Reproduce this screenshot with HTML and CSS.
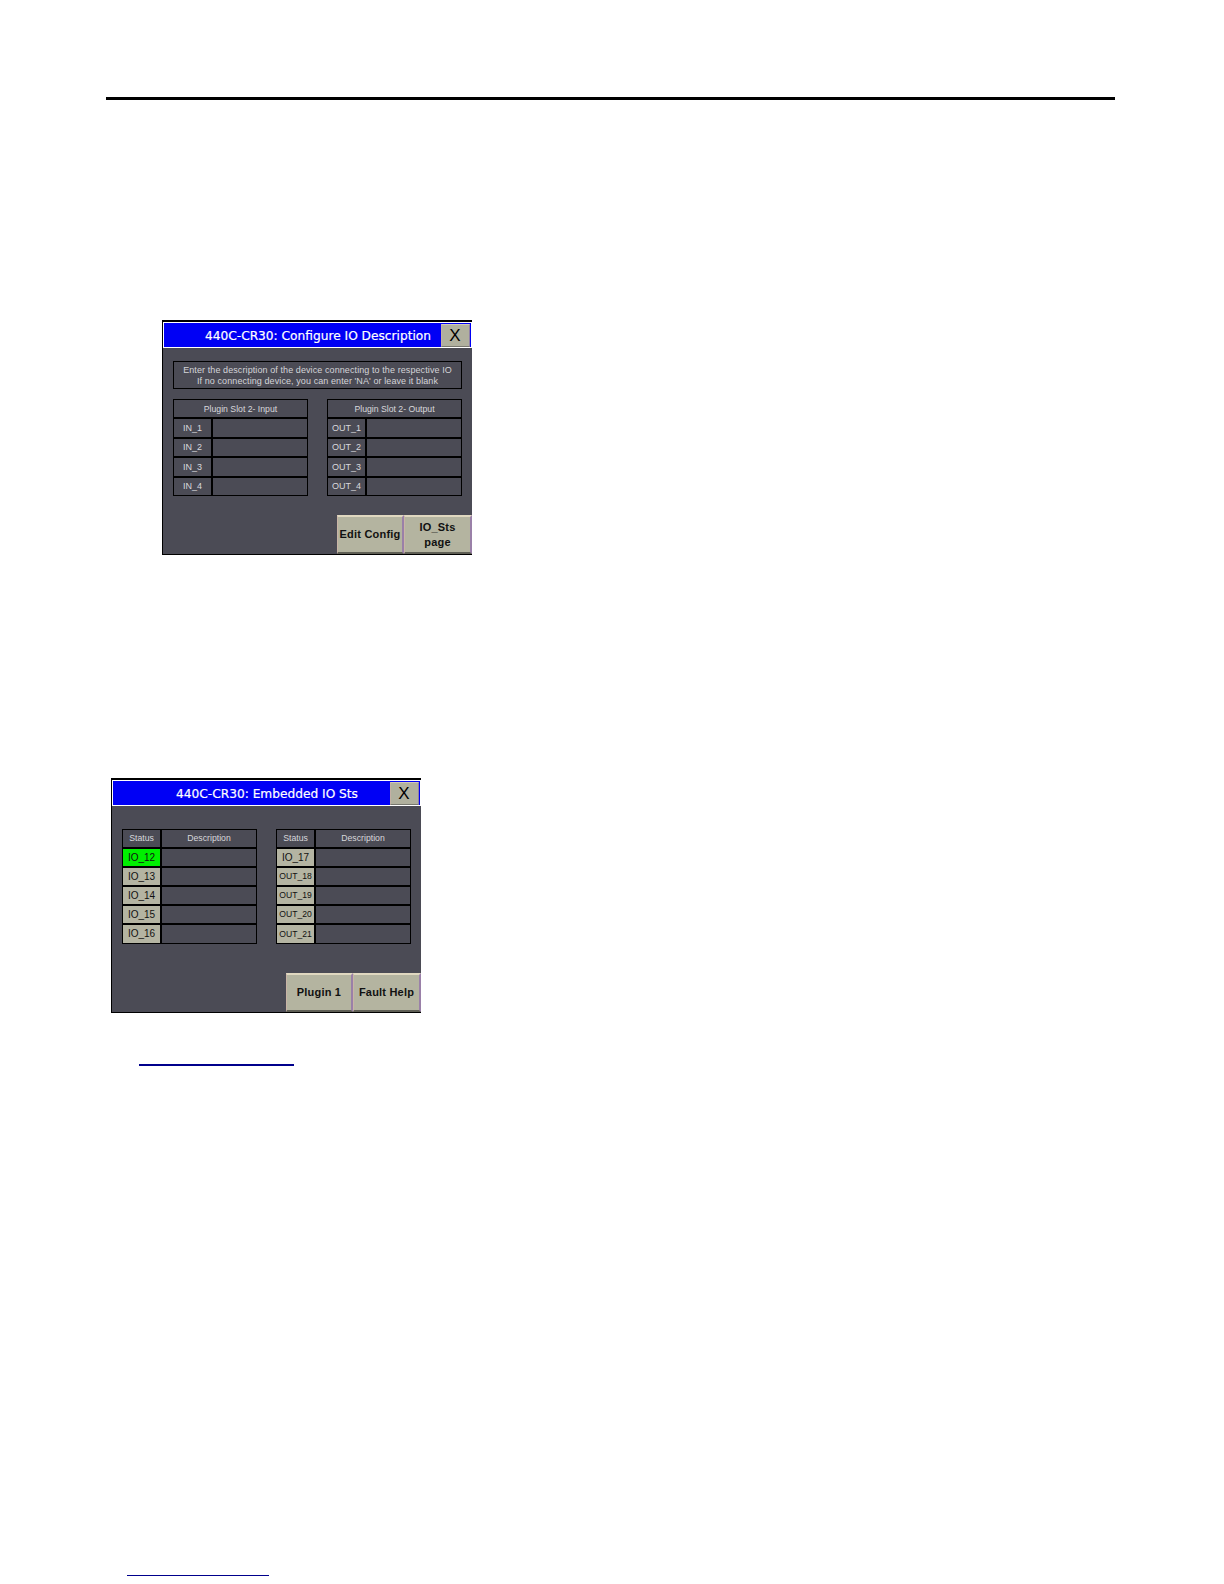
FILE: index.html
```html
<!DOCTYPE html>
<html lang="en">
<head>
<meta charset="utf-8">
<title>440C-CR30 IO screens</title>
<link rel="stylesheet" href="styles.css">
</head>
<body>
<div class="rule"></div>

<section class="window window-config">
  <header class="titlebar">
    <h2 class="title">440C-CR30: Configure IO Description</h2>
    <button class="close">X</button>
  </header>
  <div class="notice">
    <p>Enter the description of the device connecting to the respective IO</p>
    <p>If no connecting device, you can enter 'NA' or leave it blank</p>
  </div>
  <div class="tables">
    <div class="iotable">
      <div class="cell head span">Plugin Slot 2- Input</div>
      <div class="cell label">IN_1</div><div class="cell"></div>
      <div class="cell label">IN_2</div><div class="cell"></div>
      <div class="cell label">IN_3</div><div class="cell"></div>
      <div class="cell label">IN_4</div><div class="cell"></div>
    </div>
    <div class="iotable">
      <div class="cell head span">Plugin Slot 2- Output</div>
      <div class="cell label">OUT_1</div><div class="cell"></div>
      <div class="cell label">OUT_2</div><div class="cell"></div>
      <div class="cell label">OUT_3</div><div class="cell"></div>
      <div class="cell label">OUT_4</div><div class="cell"></div>
    </div>
  </div>
  <div class="actions">
    <button class="action">Edit Config</button>
    <button class="action">IO_Sts<br>page</button>
  </div>
</section>

<section class="window window-status">
  <header class="titlebar">
    <h2 class="title">440C-CR30: Embedded IO Sts</h2>
    <button class="close">X</button>
  </header>
  <div class="tables tables-status">
    <div class="iotable">
      <div class="cell head">Status</div><div class="cell head">Description</div>
      <div class="cell status on">IO_12</div><div class="cell"></div>
      <div class="cell status">IO_13</div><div class="cell"></div>
      <div class="cell status">IO_14</div><div class="cell"></div>
      <div class="cell status">IO_15</div><div class="cell"></div>
      <div class="cell status">IO_16</div><div class="cell"></div>
    </div>
    <div class="iotable">
      <div class="cell head">Status</div><div class="cell head">Description</div>
      <div class="cell status">IO_17</div><div class="cell"></div>
      <div class="cell status narrow">OUT_18</div><div class="cell"></div>
      <div class="cell status narrow">OUT_19</div><div class="cell"></div>
      <div class="cell status narrow">OUT_20</div><div class="cell"></div>
      <div class="cell status narrow">OUT_21</div><div class="cell"></div>
    </div>
  </div>
  <div class="actions">
    <button class="action">Plugin 1</button>
    <button class="action">Fault Help</button>
  </div>
</section>

<div class="linkline linkline-body"></div>
<div class="linkline linkline-foot"></div>
</body>
</html>
```

FILE: styles.css
```css
* { box-sizing: border-box; }

html, body { margin: 0; padding: 0; background: #fff; }

body {
  height: 1584px;
  overflow: hidden;
  font-family: "Liberation Sans", Arial, sans-serif;
}

.rule {
  height: 3px;
  margin: 97px 109px 0 106px;
  background: #000;
}

.window {
  display: flex;
  flex-direction: column;
  width: 310px;
  height: 235px;
  background: #4b4b55;
  border: solid #000;
  border-width: 2px 0 1px 1px;
}

.window-config { margin: 220px 0 0 162px; }
.window-status { margin: 223px 0 0 111px; }

.titlebar {
  display: grid;
  grid-template-columns: 1fr auto 1fr;
  align-items: center;
  height: 26px;
  padding: 0 1px 0 2px;
  background: #0000f5;
  border: 1px solid #fff;
}

.title {
  grid-column: 2;
  margin: 2px 0 0;
  font: 400 12.2px "DejaVu Sans", sans-serif;
  color: #fff;
  white-space: nowrap;
  -webkit-text-stroke: 0.2px #fff;
}

.close {
  grid-column: 3;
  justify-self: end;
  width: 29px;
  height: 23px;
  margin-top: 1px;
  padding: 0 1px 0 0;
  background: #b0b09e;
  border: 1px solid;
  border-color: #cfc8b8 #8f80a8 #77776f #c4b0a4;
  font: 400 17px "Liberation Sans", sans-serif;
  color: #000;
}

.notice {
  margin: 13px 10px 0 10px;
  height: 28px;
  border: 1px solid #000;
  color: #d4d4d8;
  font-size: 9px;
  letter-spacing: 0.09px;
  line-height: 11px;
  text-align: center;
  padding-top: 3px;
}

.notice p { margin: 0; white-space: nowrap; }

.tables {
  display: flex;
  justify-content: space-between;
  margin: 10px 10px 0 10px;
}

.tables-status { margin-top: 23px; }

.iotable {
  display: grid;
  grid-template-columns: 37px 94px;
  grid-auto-rows: 17.1px;
  gap: 2px;
  width: 135px;
  padding: 1px;
  background: #000;
}

.window-config .iotable { grid-auto-rows: 17.4px; }

.cell {
  display: flex;
  align-items: center;
  justify-content: center;
  padding-bottom: 1px;
  background: #4b4b55;
  color: #d8d8dc;
  font-size: 8.7px;
  white-space: nowrap;
}

.window-config .cell { padding-bottom: 0; }

.span { grid-column: 1 / -1; }

.label {
  justify-content: flex-start;
  padding-left: 9px;
  font-size: 9px;
}

.iotable:last-child .label { padding-left: 4px; }

.status {
  background: #b4b4a2;
  color: #111;
  font-size: 10px;
}

.status.on { background: #00f000; }
.status.narrow { font-size: 8.6px; }

.actions {
  display: flex;
  justify-content: flex-end;
  margin-top: auto;
}

.action {
  height: 39px;
  padding: 0;
  background: #b4b4a0;
  border: solid;
  border-width: 2px 2px 2px 1px;
  border-color: #e0d8c0 #9a80a8 #5f5f55 #c9b4a6;
  font: 700 11px/15px "Liberation Sans", sans-serif;
  letter-spacing: 0.2px;
  color: #111;
}

.action:first-child { width: 67px; }
.action:last-child { width: 68px; }

.linkline { height: 1.5px; background: #00008c; }
.linkline-body { width: 155px; margin: 51px 0 0 139px; }
.linkline-foot { width: 142px; margin: 509px 0 0 127px; }
```
